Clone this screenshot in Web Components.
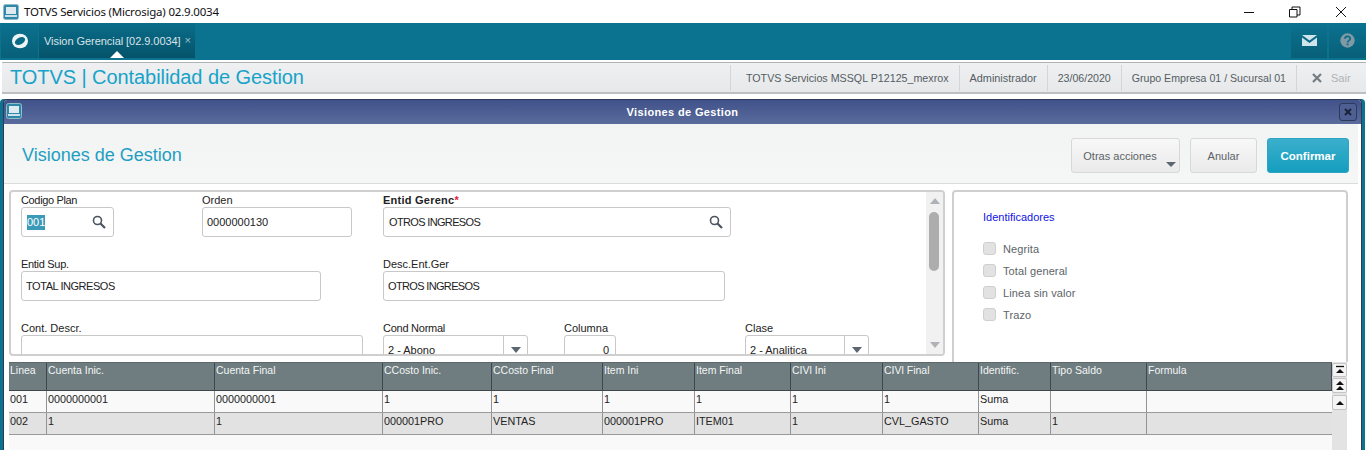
<!DOCTYPE html>
<html lang="es"><head><meta charset="utf-8"><title>TOTVS</title>
<style>
html,body{margin:0;height:450px;overflow:hidden;background:#fff;font-family:"Liberation Sans",Arial,sans-serif;font-size:11px}
</style></head><body>
<app-shell>
  <win-titlebar>TOTVS Servicios (Microsiga) 02.9.0034</win-titlebar>
  <top-bar tab="Vision Gerencial [02.9.0034]"></top-bar>
  <module-header title-text="TOTVS | Contabilidad de Gestion"></module-header>
  <dialog-window caption="Visiones de Gestion" heading="Visiones de Gestion">
    <form-panel>
      <text-field style="grid-column:1;grid-row:1;width:93px;--ls:-.35px" label="Codigo Plan" value="001" selected search></text-field>
      <text-field style="grid-column:2;grid-row:1;width:150px" label="Orden" value="0000000130"></text-field>
      <text-field style="grid-column:3 / span 2;grid-row:1;width:348px;--ls:.25px;--vs:-.65px" label="Entid Gerenc" value="OTROS INGRESOS" required search inset="5"></text-field>
      <text-field style="grid-column:1 / span 2;grid-row:2;width:300px;--ls:-.3px;--vs:-.45px" label="Entid Sup." value="TOTAL INGRESOS"></text-field>
      <text-field style="grid-column:3 / span 2;grid-row:2;width:342px;--vs:-.65px" label="Desc.Ent.Ger" value="OTROS INGRESOS"></text-field>
      <text-field style="grid-column:1 / span 2;grid-row:3;width:342px" label="Cont. Descr." value=""></text-field>
      <text-field style="grid-column:3;grid-row:3;width:145px;--ls:-.25px" label="Cond Normal" value="2 - Abono" combo></text-field>
      <text-field style="grid-column:4;grid-row:3;width:52px" label="Columna" value="0" numeric></text-field>
      <text-field style="grid-column:5;grid-row:3;width:124px" label="Clase" value="2 - Analitica" combo></text-field>
    </form-panel>
    <id-panel slot="side" heading="Identificadores">
      <check-row>Negrita</check-row>
      <check-row>Total general</check-row>
      <check-row>Linea sin valor</check-row>
      <check-row>Trazo</check-row>
    </id-panel>
    <data-grid slot="grid"></data-grid>
  </dialog-window>
</app-shell>
<template id="monitor"><svg width="16" height="16" viewBox="0 0 16 16"><rect x=".5" y=".5" width="15" height="15" rx="2" fill="#2f88a8" stroke="#8fbccb"/><rect x="3" y="3" width="10" height="7" fill="#dfeaf0"/><path d="M2 11h12v2H2z" fill="#cfe0e8"/></svg></template>
<script>
const def=(name,css,html,init)=>customElements.define(name,class extends HTMLElement{
  connectedCallback(){
    if(this.shadowRoot)return;
    const r=this.attachShadow({mode:'open'});
    r.innerHTML='<style>'+css+'</style>'+(typeof html==='function'?html(this):html);
    if(init)init(this,r);
  }
});
const MON=document.getElementById('monitor').innerHTML;

def('app-shell',':host{display:flex;flex-direction:column;width:1366px;height:450px;overflow:hidden;background:#fff}','<slot></slot>');

def('win-titlebar',`:host{display:flex;align-items:center;height:23px;flex:none;background:#fff;color:#111;font:11.5px "Noto Sans","Open Sans",sans-serif;padding-left:3px}
.ic{margin-right:5px;display:flex}.t{flex:1;letter-spacing:-.2px}
.b{width:46px;height:23px;display:flex;align-items:center;justify-content:center}`,
()=>`<span class="ic">${MON}</span><span class="t"><slot></slot></span>
<span class="b"><svg width="12" height="12"><path d="M1 6.500h10" stroke="#111"/></svg></span>
<span class="b"><svg width="12" height="12"><path d="M.5 3.500h7.500v7.500H.5zM3 3.500V1h8v8H8" fill="none" stroke="#111"/></svg></span>
<span class="b" style="margin-right:2px"><svg width="12" height="12"><path d="M1 1l10 10M11 1L1 11" stroke="#111"/></svg></span>`);

def('top-bar',`:host{display:flex;height:37px;flex:none;background:#0b7290;color:#dbe7ec;align-items:flex-start}
.logo,.tab,.rt{height:35px;background:linear-gradient(#0b7290,#085f78);display:flex;align-items:center;justify-content:center;box-sizing:border-box}
.logo{width:37px;margin-left:1px}
.tab{width:156px;margin-left:1px;justify-content:flex-start;padding-left:5px;position:relative;background:linear-gradient(#0a6d89,#05536a);font-size:11px;color:#d8e3e8;white-space:nowrap;letter-spacing:-.05px}
.tab i{font-style:normal;color:#9fc0cd;margin-left:4px;font-size:11px;position:relative;top:-1px}
.tab:after{content:"";position:absolute;left:71px;bottom:0;border:7px solid transparent;border-top:0;border-bottom-color:#fff}
.sp{flex:1}.rt{width:36px;margin-left:2px;margin-right:0}.rt.h{width:37px;margin-left:2px}`,
h=>`<div class="logo"><svg width="18" height="16" viewBox="0 0 18 16"><ellipse cx="9" cy="8" rx="8" ry="7.300" fill="#eef4f6"/><ellipse cx="9" cy="8" rx="5.500" ry="3.400" transform="rotate(-28 9 8)" fill="#0a6a85"/></svg></div>
<div class="tab"><span>${h.getAttribute('tab')}</span><i>×</i></div><div class="sp"></div>
<div class="rt"><svg width="15" height="11" viewBox="0 0 15 11"><path d="M0 0h15L7.500 5.500zM0 2.500l7.500 5.500L15 2.500V11H0z" fill="#cfe5ec"/></svg></div>
<div class="rt h"><svg width="15" height="15" viewBox="0 0 15 15"><circle cx="7.500" cy="7.500" r="7.200" fill="#7f9aa5"/><path d="M5 5.800c0-3.200 5.200-3.200 5.200-.2 0 2-2.600 2-2.600 3.800" fill="none" stroke="#0b6a85" stroke-width="1.700"/><rect x="6.700" y="10.500" width="1.800" height="1.800" fill="#0b6a85"/></svg></div>`);

def('header-item',`:host{display:flex;align-items:center;height:26px;padding:0 10px;border-left:1px solid #d3d6d8;color:#555d63;font-size:11px;white-space:nowrap}`,'<slot></slot>');

def('module-header',`:host{display:flex;align-items:center;height:29px;flex:none;margin:2px 0 0 2px;background:linear-gradient(#eef0f2,#e6e8ea);border-top:1px solid #aeb2b4;border-bottom:2px solid #bcc0c2;box-sizing:content-box}
h1{margin:0 0 0 8px;flex:1;font:400 20px "Liberation Sans",sans-serif;color:#17a3c9;letter-spacing:-.07px}
.x{display:flex;align-items:center;gap:9px;width:70px;box-sizing:border-box;padding-left:15px;color:#aeb3b6}`,
h=>`<h1>${h.getAttribute('title-text')}</h1>
<header-item style="padding-left:15px;font-size:10.700px">TOTVS Servicios MSSQL P12125_mexrox</header-item>
<header-item style="font-size:10.900px">Administrador</header-item><header-item style="font-size:10.600px">23/06/2020</header-item><header-item style="font-size:10.600px">Grupo Empresa 01 / Sucursal 01</header-item>
<header-item class="x"><svg width="10" height="10" viewBox="0 0 10 10"><path d="M1 1l8 8M9 1L1 9" stroke="#737c83" stroke-width="2.200"/></svg><span style="color:#aeb3b6">Sair</span></header-item>`);

def('dialog-window',`:host{display:flex;flex-direction:column;margin:5px 4px 0 3px;flex:1;min-height:0;border:1px solid #2f3a58;border-bottom:0;border-radius:4px 4px 0 0;box-shadow:3px 0 0 #0b7290,-3px 0 0 #0b7290;background:#fff;overflow:hidden}
.cap{height:24px;flex:none;background:linear-gradient(#40528a,#5a6b9c);display:flex;align-items:center;color:#fff;font-weight:700;font-size:11px;letter-spacing:.36px;position:relative;justify-content:center}
.cap .ic{position:absolute;left:2px;top:3px;display:flex}
.cap .cl{position:absolute;right:4px;top:3px;width:16px;height:16px;border:1px solid #2f3a58;border-radius:3px;display:flex;align-items:center;justify-content:center;background:#4d5f93}
.act{height:60px;box-sizing:border-box;flex:none;background:linear-gradient(#f2f3f3,#f5f6f6);border-bottom:1px solid #dcdcdc;margin-right:3px;display:flex;align-items:center;padding:4px 9px 0 18px;gap:10px}
h2{margin:0;flex:1;font:400 18px "Liberation Sans",sans-serif;color:#1e9fc2}
.btn{height:35px;box-sizing:border-box;border:1px solid #d8d8d8;border-radius:3px;background:linear-gradient(#f8f8f8,#eaeaea);display:flex;align-items:center;justify-content:center;color:#5b6368;font-size:11px;position:relative}
.btn.pri{background:linear-gradient(#3bafcc,#159ebf);border-color:#2ba5c4;color:#fff;font-weight:700;font-size:11.500px}
.btn.more:after{content:"";position:absolute;right:3px;bottom:5px;border:5px solid transparent;border-bottom:0;border-top:5px solid #5c6670}
.row{display:flex;gap:7px;padding:6px 0 0 5px;height:178px;box-sizing:border-box;flex:none;overflow:hidden;align-items:flex-start}
.gridwrap{padding-left:5px;flex:1;min-height:0;overflow:hidden}`,
h=>`<div class="cap"><span class="ic">${MON}</span><span>${h.getAttribute('caption')}</span><span class="cl"><svg width="8" height="8" viewBox="0 0 8 8"><path d="M1 1l6 6M7 1L1 7" stroke="#1b2238" stroke-width="2"/></svg></span></div>
<div class="act"><h2>${h.getAttribute('heading')}</h2>
<div class="btn more" style="width:109px;padding-right:11px">Otras acciones</div>
<div class="btn" style="width:67px">Anular</div><div class="btn pri" style="width:82px">Confirmar</div></div>
<div class="row"><slot></slot><slot name="side"></slot></div>
<div class="gridwrap"><slot name="grid"></slot></div>`);

def('form-panel',`:host{display:block;flex:none;width:936px;height:166px;box-sizing:border-box;border:2px solid #cfcfcf;border-radius:4px;background:#fff;overflow:hidden;position:relative}
.in{display:flex;height:100%}
.g{flex:1;display:grid;grid-template-columns:181px 181px 181px 181px 181px;grid-auto-rows:43px;row-gap:21px;padding:2px 0 0 10px;box-sizing:border-box;overflow:hidden;min-width:0;height:100%}
.sb{width:17px;flex:none;background:#f1f1f1;display:flex;flex-direction:column;align-items:center;justify-content:space-between;padding:6px 0;box-sizing:border-box;position:relative}
.th{position:absolute;left:3px;top:20px;width:10px;height:59px;border-radius:5px;background:#adadad}
.u{width:0;height:0;border:5px solid transparent;border-top:0;border-bottom:6px solid #aeb2b6}
.d{width:0;height:0;border:5px solid transparent;border-bottom:0;border-top:6px solid #aeb2b6}`,
`<div class="in"><div class="g"><slot></slot></div><div class="sb"><div class="u"></div><div class="th"></div><div class="d"></div></div></div>`);

def('text-field',`:host{display:flex;flex-direction:column;font-size:11px;color:#222;min-width:0}
label{height:13px;line-height:12px;white-space:nowrap;letter-spacing:var(--ls,0)}
b{color:#e02040;font-weight:700}
.box{height:30px;flex:none;box-sizing:border-box;border:1px solid #c8c8c8;border-radius:3px;display:flex;align-items:center;padding:0 4px;background:#fff;position:relative}
.v{flex:1;white-space:nowrap;color:#222;letter-spacing:var(--vs,0)}
.sel{background:#3a9ab8;color:#fff;padding:1px 0;display:inline-block;line-height:13px;margin-left:1px}
.cb{width:23px;height:100%;border-left:1px solid #c8c8c8;display:flex;align-items:center;justify-content:center;margin-right:-4px;flex:none}
.cb i{border:5px solid transparent;border-bottom:0;border-top:6px solid #5c6670}
.s{display:flex;flex:none;margin-right:3px}`,
h=>{const a=n=>h.hasAttribute(n),v=h.getAttribute('value');
const inset=h.getAttribute('inset');
return `<label style="${a('required')?'font-weight:700':''}">${h.getAttribute('label')}${a('required')?'<b>*</b>':''}</label>
<div class="box"><span class="v" style="${a('numeric')?'text-align:right;padding-right:2px;':''}${inset?'padding-left:1px':''}">${a('selected')?`<span class="sel">${v}</span>`:v}</span>
${a('search')?'<span class="s"><svg width="14" height="14" viewBox="0 0 14 14"><circle cx="5.500" cy="5.500" r="4" fill="none" stroke="#4b5560" stroke-width="1.600"/><path d="M8.500 8.500l4.500 4.500" stroke="#4b5560" stroke-width="2.200"/></svg></span>':''}
${a('combo')?'<span class="cb"><i></i></span>':''}</div>`});

def('id-panel',`:host{display:flex;flex-direction:column;flex:none;width:396px;height:190px;box-sizing:border-box;border:2px solid #cfcfcf;border-radius:4px;padding:18px 0 0 29px;background:#fff}
h3{margin:0 0 18px;font:400 11px/14px "Liberation Sans",sans-serif;color:#1212e6}
.l{display:flex;flex-direction:column;gap:9px}`,
h=>`<h3>${h.getAttribute('heading')}</h3><div class="l"><slot></slot></div>`);

def('check-row',`:host{display:flex;align-items:center;gap:7px;height:13px;color:#5c6468;font-size:11px;letter-spacing:.01em}
i{width:13px;height:13px;box-sizing:border-box;border:1px solid #cfcfcf;border-radius:3px;background:#e2e2e2;flex:none}`,
`<i></i><slot></slot>`);

const COLS=[38,168,168,109,111,92,96,92,96,72,96,185];
const HEAD=['Linea','Cuenta Inic.','Cuenta Final','CCosto Inic.','CCosto Final','Item Ini','Item Final','CIVl Ini','CIVl Final','Identific.','Tipo Saldo','Formula'];
const ROWS=[['001','0000000001','0000000001','1','1','1','1','1','1','Suma','',''],
['002','1','1','000001PRO','VENTAS','000001PRO','ITEM01','1','CVL_GASTO','Suma','1','']];
def('data-grid',`:host{display:flex;width:1338px;height:88px;background:#f9f9f9}
.t{width:1323px;flex:none}
.r{display:grid;box-sizing:border-box;grid-template-columns:${COLS.map(c=>c+'px').join(' ')};}
.c{box-sizing:border-box;padding-left:1px;white-space:nowrap;overflow:hidden;border-right:1px solid #8f9597;font-size:10.800px;color:#222}
.c:last-child{border-right:0}
.hd{height:29px;background:#6f7d80;border-bottom:1px solid #3f474a;border-top:1px solid #5d686b}
.hd .c{color:#f2f5f5;border-right:1px solid #3f474a;line-height:12px;padding-top:1px;font-size:10.500px}
.b{height:22px;border-bottom:1px solid #9a9a9a;background:#f9f9f9}.b.alt{background:#e2e2e2}
.b .c{line-height:16px;height:21px}
.sc{flex:1;background:#e3e3e3;display:flex;flex-direction:column;gap:1px;padding-top:1px;align-items:flex-start}
.k{width:15px;height:14px;box-sizing:border-box;border:1px solid #c4c4c4;border-radius:2px;background:#f4f4f4;display:flex;align-items:center;justify-content:center}`,
()=>`<div class="t"><div class="r hd">${HEAD.map(t=>`<div class="c">${t}</div>`).join('')}</div>
${ROWS.map((r,i)=>`<div class="r b ${i?'alt':''}">${r.map(t=>`<div class="c">${t}</div>`).join('')}</div>`).join('')}</div>
<div class="sc"><div class="k"><svg width="10" height="10" viewBox="0 0 10 10"><path d="M1 1.500h8" stroke="#111" stroke-width="1.300"/><path d="M1 8l4-4 4 4z" fill="#111"/></svg></div>
<div class="k" style="height:15px"><svg width="10" height="11" viewBox="0 0 10 11"><path d="M1 5l4-4 4 4zM1 10l4-4 4 4z" fill="#111"/></svg></div>
<div class="k" style="margin-top:1px;height:15px"><svg width="10" height="10" viewBox="0 0 10 10"><path d="M1 7l4-4 4 4z" fill="#111"/></svg></div></div>`);
</script>
</body></html>
